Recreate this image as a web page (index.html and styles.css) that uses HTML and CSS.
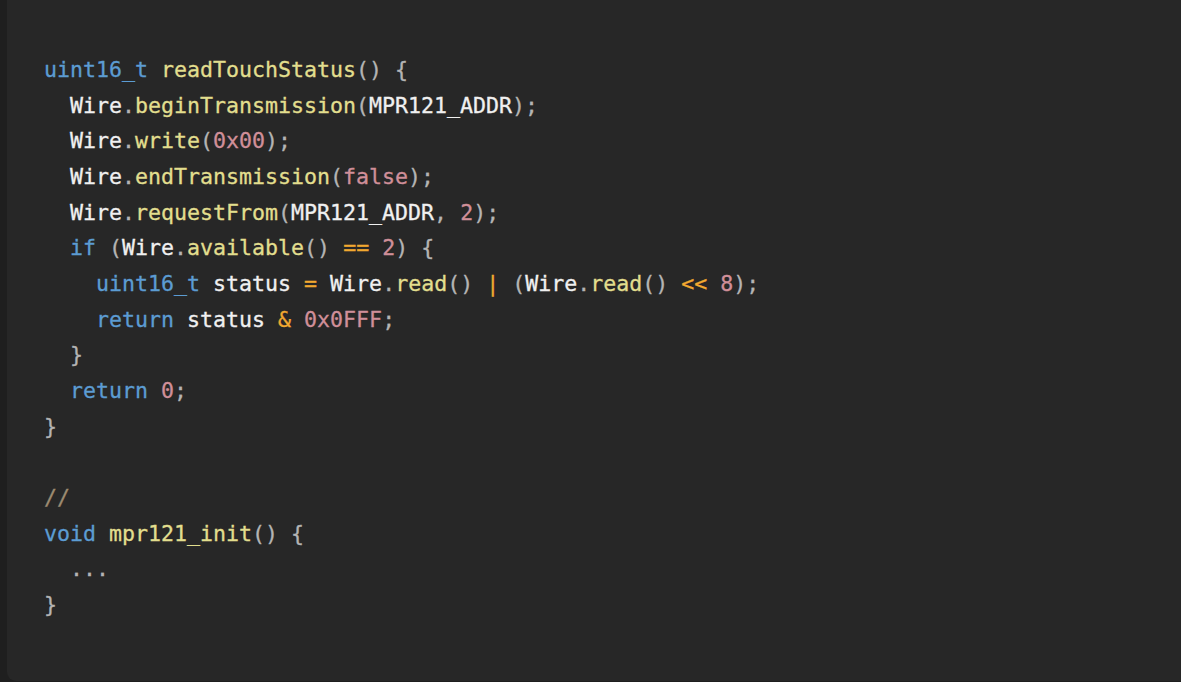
FILE: index.html
```html
<!DOCTYPE html>
<html>
<head>
<meta charset="utf-8">
<link rel="stylesheet" href="styles.css">
</head>
<body>
<div class="block">
<pre class="code"><span class="kw">uint16_t</span> <span class="fn">readTouchStatus</span><span class="p">()</span> <span class="p">{</span>
  <span class="id">Wire</span><span class="p">.</span><span class="fn">beginTransmission</span><span class="p">(</span><span class="id">MPR121_ADDR</span><span class="p">);</span>
  <span class="id">Wire</span><span class="p">.</span><span class="fn">write</span><span class="p">(</span><span class="num">0x00</span><span class="p">);</span>
  <span class="id">Wire</span><span class="p">.</span><span class="fn">endTransmission</span><span class="p">(</span><span class="num">false</span><span class="p">);</span>
  <span class="id">Wire</span><span class="p">.</span><span class="fn">requestFrom</span><span class="p">(</span><span class="id">MPR121_ADDR</span><span class="p">,</span> <span class="num">2</span><span class="p">);</span>
  <span class="kw">if</span> <span class="p">(</span><span class="id">Wire</span><span class="p">.</span><span class="fn">available</span><span class="p">()</span> <span class="op">==</span> <span class="num">2</span><span class="p">)</span> <span class="p">{</span>
    <span class="kw">uint16_t</span> <span class="id">status</span> <span class="op">=</span> <span class="id">Wire</span><span class="p">.</span><span class="fn">read</span><span class="p">()</span> <span class="op">|</span> <span class="p">(</span><span class="id">Wire</span><span class="p">.</span><span class="fn">read</span><span class="p">()</span> <span class="op">&lt;&lt;</span> <span class="num">8</span><span class="p">);</span>
    <span class="kw">return</span> <span class="id">status</span> <span class="op">&amp;</span> <span class="num">0x0FFF</span><span class="p">;</span>
  <span class="p">}</span>
  <span class="kw">return</span> <span class="num">0</span><span class="p">;</span>
<span class="p">}</span>

<span class="cm">//</span>
<span class="kw">void</span> <span class="fn">mpr121_init</span><span class="p">()</span> <span class="p">{</span>
  <span class="p">...</span>
<span class="p">}</span></pre>
</div>
</body>
</html>
```
FILE: styles.css
```css
html, body {
  margin: 0;
  padding: 0;
  background: #1f1f1f;
  height: 100%;
  overflow: hidden;
}
.block {
  margin-left: 7px;
  height: 681px;
  background: #272727;
  border-bottom-left-radius: 9px;
  box-sizing: border-box;
  padding: 52px 0 0 37px;
}
.code {
  margin: 0;
  font-family: "DejaVu Sans Mono", "Liberation Mono", monospace;
  font-size: 21.6px;
  line-height: 35.67px;
  color: #e8e8e8;
  -webkit-text-stroke: 0.3px currentColor;
}
.kw { color: #5c9cd2; }
.fn { color: #e2de8e; }
.id { color: #f0f0f0; }
.p { color: #b4b4b4; }
.num { color: #d08f99; }
.op { color: #f2a930; }
.cm { color: #9c8a70; }
```
